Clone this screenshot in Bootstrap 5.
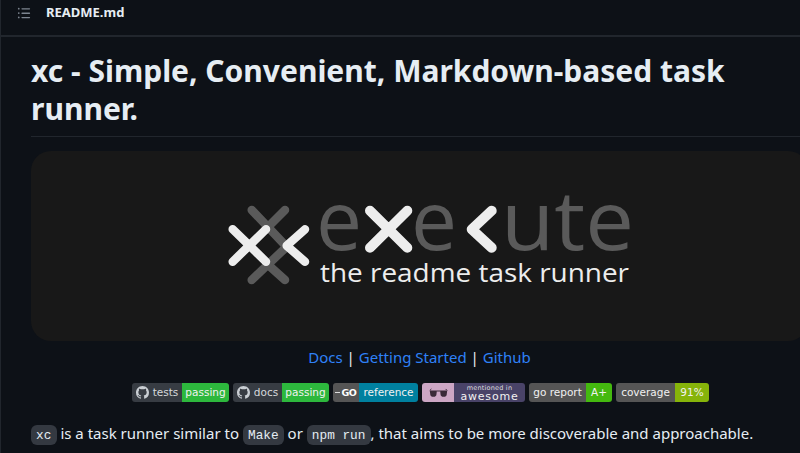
<!DOCTYPE html>
<html lang="en">
<head>
<meta charset="utf-8">
<title>README.md</title>
<link href="https://cdn.jsdelivr.net/npm/bootstrap@5.3.0/dist/css/bootstrap.min.css" rel="stylesheet">
<style>
html,body{height:453px;overflow:hidden;background:#0d1117;}
body{font-family:"Noto Sans",sans-serif;color:#e6edf3;}
.rd-frame{border-left:1px solid #21262d;height:453px;overflow:hidden;}
.rd-head{height:37px;border-bottom:2px solid #21262d;padding-left:16px;gap:15px;padding-bottom:9px;}
.rd-name{font-size:13px;font-weight:700;color:#e6edf3;}
.rd-toc{color:#7d8590;}
.rd-body{padding:0 0 0 30px;}
.rd-title{width:777px;font-size:30px;line-height:37.5px;font-weight:700;margin:15px 0 0;padding-bottom:9px;border-bottom:1px solid #21262d;color:#e6edf3;}
.rd-banner{display:block;width:777px;height:190px;margin-top:14px;background:#181818;border-radius:20px;}
.rd-links{margin:5px 0 0;width:777px;text-align:center;font-size:15px;line-height:22.5px;color:#e6edf3;}
.rd-links a{color:#2f81f7;text-decoration:none;}
.rd-badges{margin:14px 0 0;width:777px;gap:4px;padding-left:101px;}
.rd-badge{display:flex;height:19px;border-radius:3px;overflow:hidden;font-family:"DejaVu Sans",sans-serif;font-size:10.5px;line-height:19px;color:#f1f1f1;text-align:center;flex:none;}
.rd-l{background:#555;display:flex;align-items:center;justify-content:center;gap:4px;}
.rd-ghl{background:#373c43;color:#d6d9dc;}
.rd-pass{background:#2db83d;}
.rd-ref{background:#00809f;}
.rd-aw{background:#cca6c4;display:flex;align-items:center;justify-content:center;}
.rd-awr{background:#494368;display:flex;flex-direction:column;align-items:center;}
.rd-awr i{font-style:normal;font-size:6.5px;line-height:7px;margin-top:2px;color:#ddd;letter-spacing:.2px;}
.rd-awr b{font-weight:400;font-size:11px;line-height:9px;letter-spacing:.8px;}
.rd-ap{background:#44b90f;}
.rd-cov{background:#86b40a;}
.rd-go{font-size:9.5px;font-weight:700;letter-spacing:-.4px;gap:1px;color:#fff;}
.w-51{width:50px}.w-47{width:47px}.w-49{width:49px}.w-26{width:26px}.w-59{width:59px}.w-32{width:32px}.w-71{width:71px}.w-57{width:57px}.w-34{width:34px}
.rd-para{margin:20px 0 0;font-size:15px;line-height:22.5px;white-space:nowrap;color:#e6edf3;}
.rd-para code{font-family:"Liberation Mono",monospace;font-size:12.75px;color:#e6edf3;background:#343941;border-radius:6px;padding:2.55px 5.1px;}
</style>
</head>
<body>
<div class="rd-frame">
  <div class="rd-head d-flex align-items-center">
    <svg class="rd-toc" width="14" height="14" viewBox="0 0 16 16" fill="currentColor" aria-hidden="true"><path d="M5.75 2.5h8.5a.75.75 0 0 1 0 1.5h-8.5a.75.75 0 0 1 0-1.5Zm0 5h8.5a.75.75 0 0 1 0 1.5h-8.5a.75.75 0 0 1 0-1.5Zm0 5h8.5a.75.75 0 0 1 0 1.5h-8.5a.75.75 0 0 1 0-1.5ZM2 14a1 1 0 1 1 0-2 1 1 0 0 1 0 2Zm1-6a1 1 0 1 1-2 0 1 1 0 0 1 2 0ZM2 4a1 1 0 1 1 0-2 1 1 0 0 1 0 2Z"/></svg>
    <span class="rd-name">README.md</span>
  </div>
  <div class="rd-body">
    <h1 class="rd-title">xc - Simple, Convenient, Markdown-based task runner.</h1>
    <svg class="rd-banner" viewBox="0 0 777 190" aria-label="execute, the readme task runner">
      <g stroke-linecap="round" stroke-linejoin="round" fill="none">
        <g stroke="#5a5a5a" stroke-width="8.5"><path d="M220.7 59 254 94M254 59 234 79M220.7 129 254 97.3M237.3 114 254 129"/></g>
        <g stroke="#ededed" stroke-width="8.5"><path d="M201.7 78.3 235 110.7M235 78.3 201.7 110.7M274 78.3 255.7 94.7 274 110.7"/></g>
        <g stroke="#ededed" stroke-width="10"><path d="M339 59.7 376.3 96.7M376.3 59.7 339 96.7M460.7 59.7 440.7 78.3 460.7 96.7"/></g>
      </g>
      <g font-family="'Open Sans',sans-serif" font-size="82" fill="#5a5a5a">
        <text x="285" y="99">e</text>
        <text x="380" y="99">e</text>
        <text x="470" y="99" textLength="133" lengthAdjust="spacingAndGlyphs">ute</text>
      </g>
      <text x="289" y="131" font-family="'Open Sans',sans-serif" font-size="26" fill="#ededed" textLength="309" lengthAdjust="spacingAndGlyphs">the readme task runner</text>
    </svg>
    <p class="rd-links"><a href="#">Docs</a> | <a href="#">Getting Started</a> | <a href="#">Github</a></p>
    <div class="rd-badges d-flex">
      <span class="rd-badge"><span class="rd-l rd-ghl w-51"><svg width="13" height="13" viewBox="0 0 16 16" fill="#c9ced3" aria-hidden="true"><path d="M8 0c4.42 0 8 3.58 8 8a8.013 8.013 0 0 1-5.45 7.59c-.4.08-.55-.17-.55-.38 0-.27.01-1.13.01-2.2 0-.75-.25-1.23-.54-1.48 1.78-.2 3.65-.88 3.65-3.95 0-.88-.31-1.59-.82-2.15.08-.2.36-1.02-.08-2.12 0 0-.67-.22-2.2.82-.64-.18-1.32-.27-2-.27-.68 0-1.36.09-2 .27-1.53-1.03-2.2-.82-2.2-.82-.44 1.1-.16 1.92-.08 2.12-.51.56-.82 1.28-.82 2.15 0 3.06 1.86 3.75 3.64 3.95-.23.2-.44.55-.51 1.07-.46.21-1.61.55-2.33-.66-.15-.24-.6-.83-1.23-.82-.67.01-.27.38.01.53.34.19.73.9.82 1.13.16.45.68 1.31 2.69.94 0 .67.01 1.3.01 1.49 0 .21-.15.45-.55.38A7.995 7.995 0 0 1 0 8c0-4.42 3.58-8 8-8Z"/></svg>tests</span><span class="rd-pass w-47">passing</span></span>
      <span class="rd-badge"><span class="rd-l rd-ghl w-49"><svg width="13" height="13" viewBox="0 0 16 16" fill="#c9ced3" aria-hidden="true"><path d="M8 0c4.42 0 8 3.58 8 8a8.013 8.013 0 0 1-5.45 7.59c-.4.08-.55-.17-.55-.38 0-.27.01-1.13.01-2.2 0-.75-.25-1.23-.54-1.48 1.78-.2 3.65-.88 3.65-3.95 0-.88-.31-1.59-.82-2.15.08-.2.36-1.02-.08-2.12 0 0-.67-.22-2.2.82-.64-.18-1.32-.27-2-.27-.68 0-1.36.09-2 .27-1.53-1.03-2.2-.82-2.2-.82-.44 1.1-.16 1.92-.08 2.12-.51.56-.82 1.28-.82 2.15 0 3.06 1.86 3.75 3.64 3.95-.23.2-.44.55-.51 1.07-.46.21-1.61.55-2.33-.66-.15-.24-.6-.83-1.23-.82-.67.01-.27.38.01.53.34.19.73.9.82 1.13.16.45.68 1.31 2.69.94 0 .67.01 1.3.01 1.49 0 .21-.15.45-.55.38A7.995 7.995 0 0 1 0 8c0-4.42 3.58-8 8-8Z"/></svg>docs</span><span class="rd-pass w-47">passing</span></span>
      <span class="rd-badge"><span class="rd-l w-26 rd-go"><svg width="5" height="5" viewBox="0 0 5 5" stroke="#ddd" aria-hidden="true"><path d="M0 2.5h5" stroke-width="1"/></svg>GO</span><span class="rd-ref w-59">reference</span></span>
      <span class="rd-badge"><span class="rd-aw w-32"><svg width="19" height="9" viewBox="0 0 24 11" aria-hidden="true"><path d="M1 3 3 1M23 3 21 1" stroke="#3a2a38" stroke-width="1.2" fill="none"/><path d="M1 3h9l-.5 4a3.5 3.5 0 0 1-8 0ZM14 3h9l-.5 4a3.5 3.5 0 0 1-8 0ZM10 3h4v1.2h-4Z" fill="#3a2a38"/></svg></span><span class="rd-awr w-71"><i>mentioned in</i><b>awesome</b></span></span>
      <span class="rd-badge"><span class="rd-l w-57">go report</span><span class="rd-ap w-26">A+</span></span>
      <span class="rd-badge"><span class="rd-l w-59">coverage</span><span class="rd-cov w-34">91%</span></span>
    </div>
    <p class="rd-para"><code>xc</code> is a task runner similar to <code>Make</code> or <code>npm run</code>, that aims to be more discoverable and approachable.</p>
  </div>
</div>
<script src="https://cdn.jsdelivr.net/npm/bootstrap@5.3.0/dist/js/bootstrap.bundle.min.js"></script>
</body>
</html>
